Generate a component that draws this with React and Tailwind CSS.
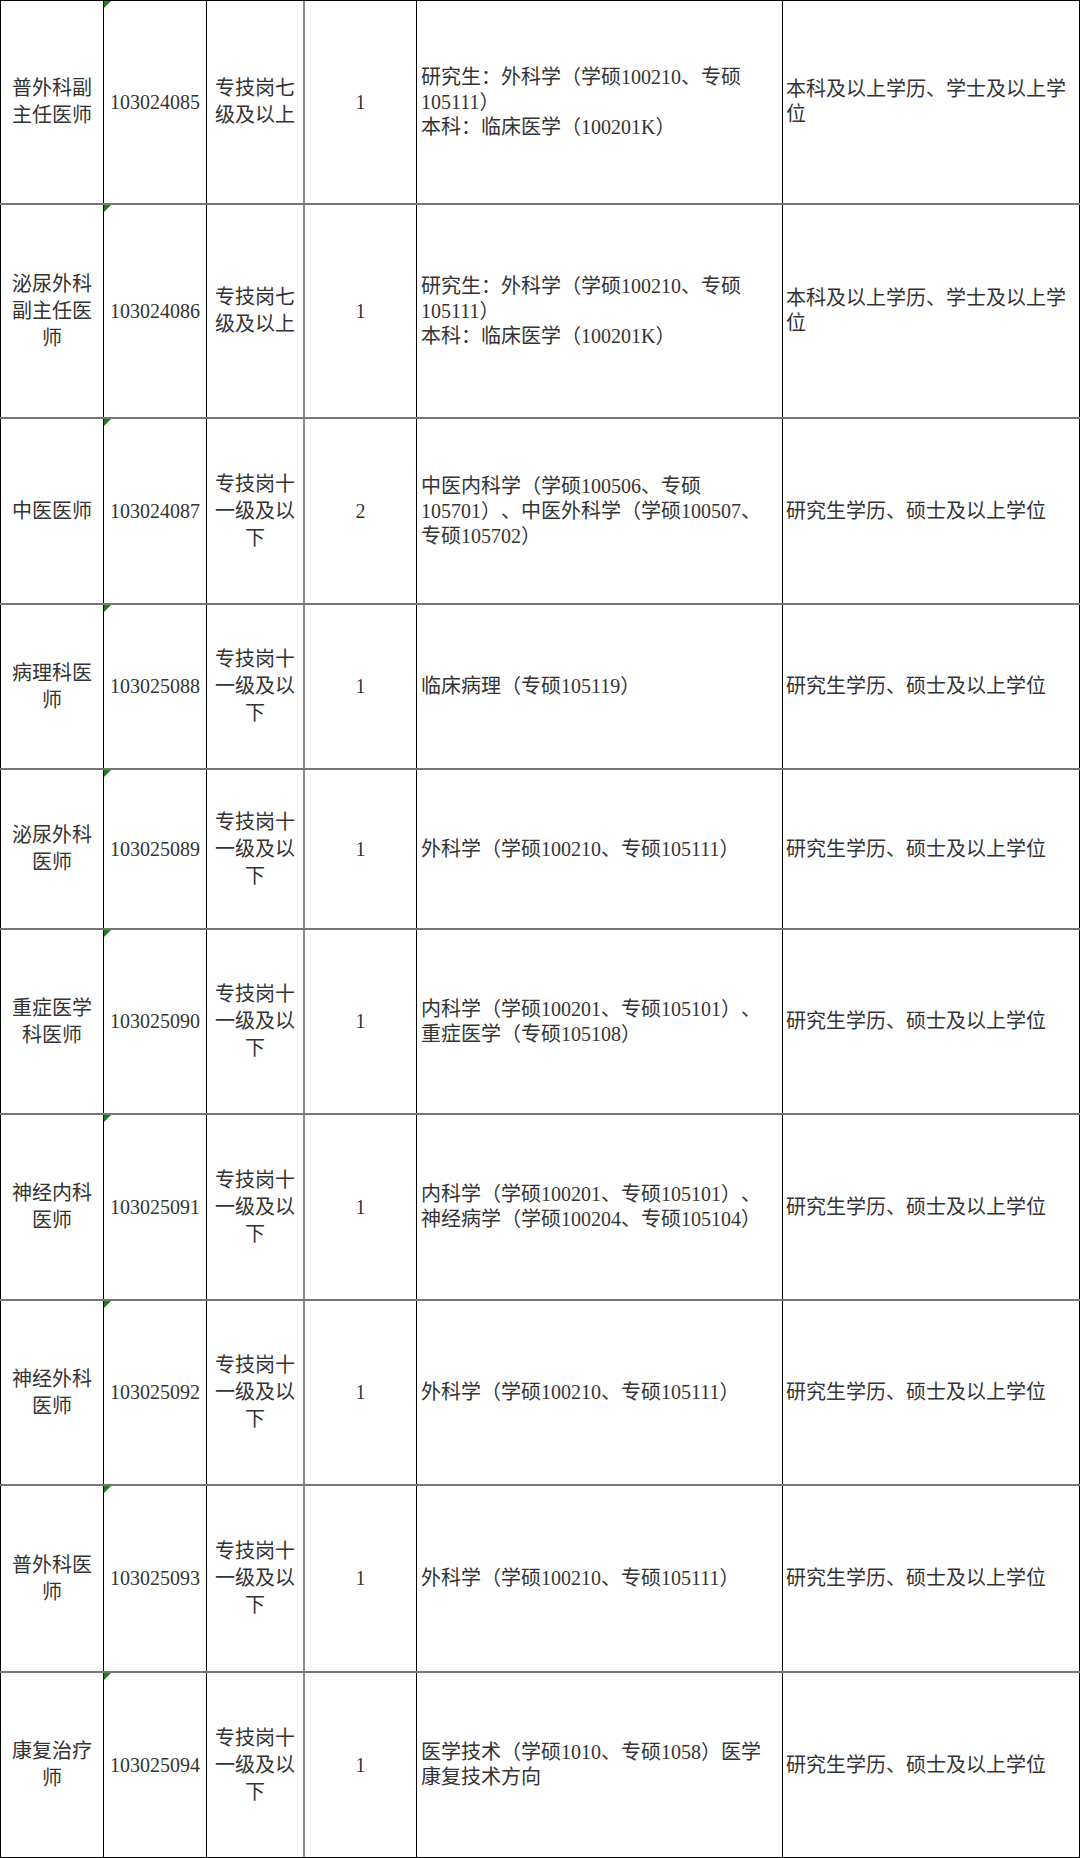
import React from "react"

const rows = [
    {
        h: "h-[204px]",
        name: ["普外科副", "主任医师"],
        code: "103024085",
        level: ["专技岗七", "级及以上"],
        count: "1",
        major: ["研究生：外科学（学硕100210、专硕", "105111）", "本科：临床医学（100201K）"],
        degree: ["本科及以上学历、学士及以上学", "位"]
    },
    {
        h: "h-[214px]",
        name: ["泌尿外科", "副主任医", "师"],
        code: "103024086",
        level: ["专技岗七", "级及以上"],
        count: "1",
        major: ["研究生：外科学（学硕100210、专硕", "105111）", "本科：临床医学（100201K）"],
        degree: ["本科及以上学历、学士及以上学", "位"]
    },
    {
        h: "h-[186px]",
        name: ["中医医师"],
        code: "103024087",
        level: ["专技岗十", "一级及以", "下"],
        count: "2",
        major: ["中医内科学（学硕100506、专硕", "105701）、中医外科学（学硕100507、", "专硕105702）"],
        degree: ["研究生学历、硕士及以上学位"]
    },
    {
        h: "h-[165px]",
        name: ["病理科医", "师"],
        code: "103025088",
        level: ["专技岗十", "一级及以", "下"],
        count: "1",
        major: ["临床病理（专硕105119）"],
        degree: ["研究生学历、硕士及以上学位"]
    },
    {
        h: "h-[160px]",
        name: ["泌尿外科", "医师"],
        code: "103025089",
        level: ["专技岗十", "一级及以", "下"],
        count: "1",
        major: ["外科学（学硕100210、专硕105111）"],
        degree: ["研究生学历、硕士及以上学位"]
    },
    {
        h: "h-[185px]",
        name: ["重症医学", "科医师"],
        code: "103025090",
        level: ["专技岗十", "一级及以", "下"],
        count: "1",
        major: ["内科学（学硕100201、专硕105101）、", "重症医学（专硕105108）"],
        degree: ["研究生学历、硕士及以上学位"]
    },
    {
        h: "h-[186px]",
        name: ["神经内科", "医师"],
        code: "103025091",
        level: ["专技岗十", "一级及以", "下"],
        count: "1",
        major: ["内科学（学硕100201、专硕105101）、", "神经病学（学硕100204、专硕105104）"],
        degree: ["研究生学历、硕士及以上学位"]
    },
    {
        h: "h-[185px]",
        name: ["神经外科", "医师"],
        code: "103025092",
        level: ["专技岗十", "一级及以", "下"],
        count: "1",
        major: ["外科学（学硕100210、专硕105111）"],
        degree: ["研究生学历、硕士及以上学位"]
    },
    {
        h: "h-[187px]",
        name: ["普外科医", "师"],
        code: "103025093",
        level: ["专技岗十", "一级及以", "下"],
        count: "1",
        major: ["外科学（学硕100210、专硕105111）"],
        degree: ["研究生学历、硕士及以上学位"]
    },
    {
        h: "h-[185px]",
        name: ["康复治疗", "师"],
        code: "103025094",
        level: ["专技岗十", "一级及以", "下"],
        count: "1",
        major: ["医学技术（学硕1010、专硕1058）医学", "康复技术方向"],
        degree: ["研究生学历、硕士及以上学位"]
    }
]


function Lines({ lines }) {
    return lines.map((line, index) => (
        <div key={index} className="whitespace-nowrap">
            {line}
        </div>
    ))
}


function App() {
    return (
        <div className="w-[1080px] bg-white border-t border-black font-['Liberation_Serif','Noto_Sans_CJK_SC',serif] text-[20px] leading-[25px] text-[#333] [text-spacing-trim:space-all]">

            {rows.map((row, index) => (
                <div
                    key={index}
                    className={`grid grid-cols-[104px_103px_98px_112px_366px_297px] ${row.h} ${index === rows.length - 1
                            ? "border-b border-black"
                            : "border-b-2 border-[#767676]"
                        }`}
                >

                    {/* Name */}
                    <div className="flex flex-col items-center justify-center border-l border-r border-black text-center leading-[27px]">
                        <Lines lines={row.name} />
                    </div>

                    {/* Code */}
                    <div className="relative flex items-center justify-center border-r border-black">
                        <svg
                            className="absolute left-0 top-0"
                            width="7"
                            height="7"
                            viewBox="0 0 7 7"
                        >
                            <path d="M0 0 L7 0 L0 7 Z" fill="#1e7b1e" />
                        </svg>
                        {row.code}
                    </div>

                    {/* Level */}
                    <div className="flex flex-col items-center justify-center border-r-2 border-[#8c8c8c] text-center leading-[27px]">
                        <Lines lines={row.level} />
                    </div>

                    {/* Count */}
                    <div className="flex items-center justify-center border-r border-black">
                        {row.count}
                    </div>

                    {/* Major */}
                    <div className="flex flex-col justify-center border-r border-black pl-1">
                        <Lines lines={row.major} />
                    </div>

                    {/* Degree */}
                    <div className="flex flex-col justify-center border-r border-black pl-[3px]">
                        <Lines lines={row.degree} />
                    </div>

                </div>
            ))}

        </div>
    )
}


export default App
